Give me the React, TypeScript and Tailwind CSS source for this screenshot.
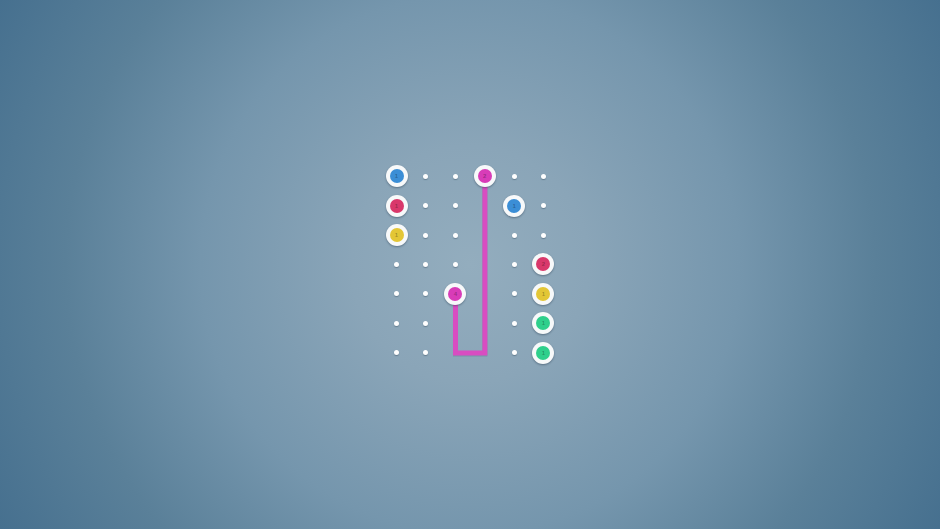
type Cell =
  | { kind: 'dot' }
  | { kind: 'empty' }
  | { kind: 'node'; color: string; n: number }

const BLUE = '#3b8ed6'
const RED = '#d9386b'
const YELLOW = '#e3c636'
const PINK = '#d83cb8'
const GREEN = '#2fcf8c'

const dot = { kind: 'dot' } as const
const empty = { kind: 'empty' } as const
const node = (color: string, n: number): Cell => ({ kind: 'node', color, n })

const BOARD: Cell[][] = [
  [node(BLUE, 1), dot, dot, node(PINK, 2), dot, dot],
  [node(RED, 1), dot, dot, empty, node(BLUE, 1), dot],
  [node(YELLOW, 1), dot, dot, empty, dot, dot],
  [dot, dot, dot, empty, dot, node(RED, 2)],
  [dot, dot, node(PINK, 4), empty, dot, node(YELLOW, 1)],
  [dot, dot, empty, empty, dot, node(GREEN, 1)],
  [dot, dot, empty, empty, dot, node(GREEN, 1)],
]

const STEP = 29.4

// pink link: row 0 col 3 -> down to row 6 -> left to col 2 -> up to row 4
const c = (i: number) => (i + 0.5) * STEP
const LINK = `M ${c(3)} ${c(0)} L ${c(3)} ${c(6)} L ${c(2)} ${c(6)} L ${c(2)} ${c(4)}`

const Node = ({ color, n }: { color: string; n: number }) => (
  <div className="w-[22px] h-[22px] rounded-full bg-[#f7f9fa] flex items-center justify-center shadow-[0_1px_2px_rgba(30,50,70,0.45)]">
    <div
      className="w-[14px] h-[14px] rounded-full flex items-center justify-center"
      style={{ backgroundColor: color }}
    >
      <span className="text-[6px] leading-none font-bold text-black/30 font-['Liberation_Sans',sans-serif]">
        {n}
      </span>
    </div>
  </div>
)

export default function App() {
  return (
    <div className="w-[940px] h-[529px] flex items-center justify-center bg-[radial-gradient(circle_at_50%_50%,#93adbe_0%,#8aa5b8_22%,#7596ad_50%,#5a8099_75%,#46708f_100%)]">
      <div className="relative">
        <svg
          className="absolute inset-0"
          width={STEP * 6}
          height={STEP * 7}
          viewBox={`0 0 ${STEP * 6} ${STEP * 7}`}
        >
          <path d={LINK} fill="none" stroke="#3c5a70" strokeOpacity={0.25} strokeWidth={5} strokeLinejoin="miter" strokeLinecap="square" transform="translate(0 1)" />
          <path d={LINK} fill="none" stroke="#d84dc1" strokeWidth={5} strokeLinejoin="miter" strokeLinecap="square" />
        </svg>

        <div className="relative grid grid-cols-[repeat(6,29.4px)] grid-rows-[repeat(7,29.4px)]">
          {BOARD.flatMap((row, r) =>
            row.map((cell, col) => (
              <div key={`${r}-${col}`} className="flex items-center justify-center">
                {cell.kind === 'dot' && (
                  <div className="w-[5px] h-[5px] rounded-full bg-white shadow-[0_1px_1px_rgba(30,50,70,0.35)]" />
                )}
                {cell.kind === 'node' && <Node color={cell.color} n={cell.n} />}
              </div>
            )),
          )}
        </div>
      </div>
    </div>
  )
}
